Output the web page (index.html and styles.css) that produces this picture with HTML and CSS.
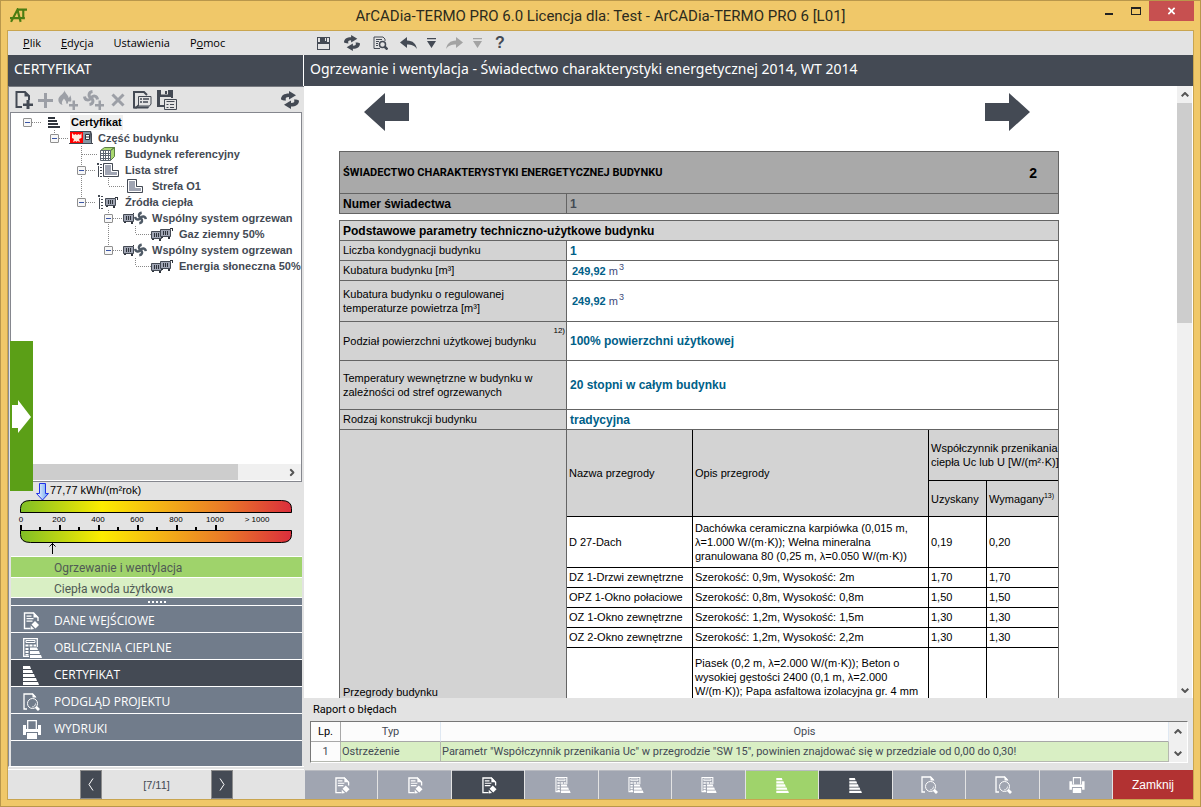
FILE: index.html
```
<!DOCTYPE html>
<html lang="pl">
<head>
    <meta charset="utf-8">
    <title>ArCADia-TERMO PRO 6</title>
    <link rel="stylesheet" href="styles.css">
</head>
<body>

<!-- shared icons -->
<svg class="sprite" aria-hidden="true">
    <symbol id="i-floppy" viewBox="0 0 14 14">
        <path fill="currentColor" fill-rule="evenodd" d="M0 1h13v13H0zM1 8v5h11V8zM1 2v4h2V2zM10 2v4h2V2zM8 2v3h1V2z"/>
    </symbol>
    <symbol id="i-refresh" viewBox="0 0 18 18">
        <path fill="currentColor" d="M0 8.500C0 4.500 3 2.500 8 2.500V0l7 4.300-7 4.200V6C5 6 4 7 5 9.500 2 9.500 1 9 0 8.500zM18 9.500c0 4-3 6-8 6V18l-7-4.300 7-4.200V12c3 0 4-1 3-3.500 3 0 4 .5 5 1z"/>
    </symbol>
    <symbol id="i-preview" viewBox="0 0 15 14">
        <path fill="none" stroke="currentColor" d="M7 12.500H1V1h9l2 2v2M3 3.500h6M3 5.500h3M3 7.500h2M3 9.500h2"/>
        <circle cx="9.500" cy="8.500" r="3" fill="none" stroke="currentColor" stroke-width="1.500"/>
        <path stroke="currentColor" stroke-width="2.500" d="M11.500 10.500l3 3"/>
    </symbol>
    <symbol id="i-undo" viewBox="0 0 17 13">
        <path fill="currentColor" d="M0 5.500L7 0v3.500c6 0 9 3.500 10 8.500-2.500-3.500-5.500-4.500-10-4.500V11z"/>
    </symbol>
    <symbol id="i-drop" viewBox="0 0 9 10">
        <path fill="currentColor" d="M0 0h9v1.200H0zM0 3h9L4.500 10z"/>
    </symbol>
    <symbol id="i-newdoc" viewBox="0 0 18 18">
        <path fill="none" stroke="currentColor" stroke-width="2" d="M7 16H1.500V1H10l4 4v4"/>
        <path fill="currentColor" d="M9.500 0L15 5.500H9.500zM8 12.500h3.500V9h3v3.500H18v2.500h-3.500v3h-3v-3H8z"/>
    </symbol>
    <symbol id="i-plus" viewBox="0 0 15 15">
        <path fill="currentColor" d="M6 0h3v6h6v3H9v6H6V9H0V6h6z"/>
    </symbol>
    <symbol id="i-flame" viewBox="0 0 20 20">
        <path fill="currentColor" d="M7 0c-1 3 4 5 3.500 8C12 7 12 6 12 5c1.500 2.500 1.500 5 1 6.500h-3v2H8c1-2-1-3-2-5-1 2-3 3-1.500 6.500C1 14 0 11 .5 8.500 1.500 5.500 5.500 4 7 0zM11 14h3.500v-3.500H17V14h3v2.500h-3V20h-2.500v-3.500H11z"/>
    </symbol>
    <symbol id="i-fan" viewBox="0 0 16 16">
        <path fill="none" stroke="currentColor" stroke-width="3" d="M8 8C5 6 5.500 2 9.500 1.500M8 8c2-3 6-2.500 6.500 1.500M8 8c3 2 2.500 6-1.500 6.500M8 8c-2 3-6 2.500-6.500-1.500"/>
    </symbol>
    <symbol id="i-fanplus" viewBox="0 0 21 20">
        <use href="#i-fan" width="16" height="16"/>
        <path fill="currentColor" d="M12 14h3.500v-3.500H18V14h3v2.500h-3V20h-2.500v-3.500H12z"/>
    </symbol>
    <symbol id="i-cross" viewBox="0 0 14 14">
        <path stroke="currentColor" stroke-width="3" d="M1.500 1.500l11 11M12.500 1.500l-11 11"/>
    </symbol>
    <symbol id="i-report" viewBox="0 0 19 18">
        <path fill="none" stroke="currentColor" stroke-width="2" d="M4 16.500H1V1h10l3 3"/>
        <path fill="#e3e3e3" stroke="currentColor" d="M5.500 5.500h12.500v7.500l-1.500 2H5.500z"/>
        <path fill="currentColor" d="M1 17.500L5.500 13v2.500h11l1.500-2-3 4z"/>
        <path stroke="currentColor" stroke-width="1.300" d="M7 8h2M10 8h6M7 11h2M10 11h5"/>
    </symbol>
    <symbol id="i-savereport" viewBox="0 0 20 20">
        <path fill="currentColor" fill-rule="evenodd" d="M0 0h16v8h-2V7H3v8h4v2H0zM4 0v4.500h7V0z"/>
        <path fill="currentColor" d="M8 1h2v3H8z"/>
        <path fill="#e3e3e3" stroke="currentColor" d="M7.500 9.500h12v10h-12z"/>
        <path stroke="currentColor" d="M9.500 11.500h8M9.500 14.500h2M13 14.500h4M9.500 17.500h2M13 17.500h4"/>
    </symbol>
    <symbol id="i-stack" viewBox="0 0 17 19">
        <path fill="currentColor" d="M0 0h7l1 3H0zM0 4h9l1 3H0zM0 8h11l1 3H0zM0 12h13l1 3H0zM0 16h15l1 3H0z"/>
    </symbol>
    <symbol id="i-edit" viewBox="0 0 16 18">
        <path fill="none" stroke="currentColor" stroke-width="1.400" d="M7 16.500H1V1h9l4.500 4.500V9"/>
        <path fill="currentColor" d="M10 0l5 5.500h-5zM3 3.500h5v1.200H3zM3 6h7v1.200H3zM3 8.500h6v1.200H3zM11.500 9l4 4-3.500 3.500-4-4zM7.200 13.500l3.500 3.500-3.500.5z"/>
    </symbol>
    <symbol id="i-calc" viewBox="0 0 19 20">
        <path fill="none" stroke="currentColor" stroke-width="1.300" d="M6 18.300H.7V.7h13.600V9"/>
        <path fill="none" stroke="currentColor" d="M3 2.500h9v2H3z"/>
        <path fill="currentColor" d="M2.500 6.500h3v2h-3zM6.500 6.500h3v2h-3zM10.500 6.500h2.500v2h-2.500zM2.500 10h3v2h-3zM2.500 13h3v2h-3zM2.500 16h3v1.500h-3zM7 9.500h7l1 2.500H7zM7 13h9l1 3H7zM7 17h11l1 3H7z"/>
    </symbol>
    <symbol id="i-search" viewBox="0 0 17 18">
        <path fill="none" stroke="currentColor" stroke-width="1.300" d="M4 16H1V1h8.500l3 3"/>
        <path fill="currentColor" d="M9.500 0l4 4.500h-4zM12 15l2-2 3 3-2 2z"/>
        <circle cx="9.500" cy="10.500" r="5" fill="none" stroke="currentColor"/>
        <path fill="none" stroke="currentColor" stroke-width=".8" d="M9 14c2 0 3.500-1.500 3.500-3.500"/>
    </symbol>
    <symbol id="i-print" viewBox="0 0 18 19">
        <path fill="currentColor" d="M0 5h3v4h12V5h3v10h-3v-3H3v3H0zM4 13h10v6H4z"/>
        <path fill="none" stroke="currentColor" stroke-width="1.300" d="M4.700 9V.7h8.600V9"/>
    </symbol>
    <symbol id="i-list" viewBox="0 0 6 14">
        <path fill="#444a54" d="M0 0h2v2H0zM1 3h1v11H1zM3 1h2v1H3zM3 4h2v1H3zM3 7h2v1H3zM3 10h2v1H3zM3 13h2v1H3z"/>
    </symbol>
    <symbol id="i-zone" viewBox="0 0 16 14">
        <path fill="#a0a5b3" stroke="#444a54" d="M.5.500h9v7h6v6H.5z"/>
        <path fill="none" stroke="#fff" d="M1.500 1.500h7v7h6v4h-13z"/>
    </symbol>
    <symbol id="i-heater" viewBox="0 0 13 12">
        <path fill="#a0a5b3" stroke="#444a54" d="M.5 2.500h10v7H.5z"/>
        <path fill="#2f343c" d="M3 4h1v4H3zM5 4h1v4H5zM7 4h1v4H7zM10 1h3v3h-1V2h-2zM1 10h2v1H1zM8 10h2v2H8z"/>
    </symbol>
    <symbol id="i-chevron" viewBox="0 0 8 5">
        <path fill="none" stroke="currentColor" stroke-width="2" d="M.7 4.300L4 1l3.300 3.300"/>
    </symbol>
    <symbol id="i-bigarrow" viewBox="0 0 45 38">
        <path fill="currentColor" d="M0 19L21 0v10h24v18H21v10z"/>
    </symbol>
</svg>

<header class="titlebar">
    <svg class="logo" viewBox="0 0 16 14" role="img" aria-label="AT">
        <path fill="none" stroke="#4b7d12" stroke-width="2" d="M1 13L7 1.500l3 11.500M7 1.500h9M12.500 1v9M0 9.500h14"/>
    </svg>
    <h1 class="window-title">ArCADia-TERMO PRO 6.0 Licencja dla: Test - ArCADia-TERMO PRO 6 [L01]</h1>
    <div class="window-buttons">
        <button type="button" class="win-btn" aria-label="Minimalizuj"><span class="min-mark"></span></button>
        <button type="button" class="win-btn" aria-label="Maksymalizuj"><span class="max-mark"></span></button>
        <button type="button" class="win-btn win-close" aria-label="Zamknij okno"><svg width="9" height="8" viewBox="0 0 14 14"><use href="#i-cross"/></svg></button>
    </div>
</header>

<div class="client">

    <div class="menubar">
        <nav class="menu">
            <a href="#"><u>P</u>lik</a>
            <a href="#"><u>E</u>dycja</a>
            <a href="#">Ustawienia</a>
            <a href="#">P<u>o</u>moc</a>
        </nav>
        <div class="quick">
            <button type="button" aria-label="Zapisz"><svg width="14" height="14"><use href="#i-floppy"/></svg></button>
            <button type="button" aria-label="Przelicz"><svg width="16" height="16"><use href="#i-refresh"/></svg></button>
            <button type="button" aria-label="Podgląd"><svg width="15" height="14"><use href="#i-preview"/></svg></button>
            <button type="button" aria-label="Cofnij"><svg width="17" height="13"><use href="#i-undo"/></svg></button>
            <button type="button" class="narrow" aria-label="Lista cofnięć"><svg width="9" height="10"><use href="#i-drop"/></svg></button>
            <button type="button" class="off" aria-label="Ponów"><svg class="flip" width="17" height="13"><use href="#i-undo"/></svg></button>
            <button type="button" class="narrow off" aria-label="Lista ponowień"><svg width="9" height="10"><use href="#i-drop"/></svg></button>
            <button type="button" class="help">?</button>
        </div>
    </div>

    <div class="headings">
        <h2>CERTYFIKAT</h2>
        <h2>Ogrzewanie i wentylacja - Świadectwo charakterystyki energetycznej 2014, WT 2014</h2>
    </div>

    <div class="main">

        <!-- left side: tree, gauge, stages -->
        <aside class="sidebar">
            <div class="tools">
                <button type="button" aria-label="Nowy"><svg width="18" height="18"><use href="#i-newdoc"/></svg></button>
                <button type="button" class="off" aria-label="Dodaj"><svg width="15" height="15"><use href="#i-plus"/></svg></button>
                <button type="button" class="off" aria-label="Dodaj ogrzewanie"><svg width="20" height="20"><use href="#i-flame"/></svg></button>
                <button type="button" class="off" aria-label="Dodaj wentylację"><svg width="21" height="20"><use href="#i-fanplus"/></svg></button>
                <button type="button" class="off" aria-label="Usuń"><svg width="14" height="14"><use href="#i-cross"/></svg></button>
                <button type="button" aria-label="Raport"><svg width="19" height="18"><use href="#i-report"/></svg></button>
                <button type="button" aria-label="Zapisz raport"><svg width="20" height="20"><use href="#i-savereport"/></svg></button>
                <button type="button" class="last" aria-label="Odśwież"><svg width="18" height="18"><use href="#i-refresh"/></svg></button>
            </div>

            <div class="tree-box">
                <ul class="tree">
                    <li>
                        <div class="node"><span class="toggle"></span><span class="pic"><svg class="dark" width="14" height="12" viewBox="0 0 14 12"><path fill="currentColor" d="M1 1h7v2H1zM1 4h9v2H1zM1 7h10v2H1zM1 10h12v2H1z"/></svg></span><b class="selected">Certyfikat</b></div>
                        <ul>
                            <li>
                                <div class="node"><span class="toggle"></span><span class="pic"><svg width="24" height="14" viewBox="0 0 24 14"><path fill="#444a54" d="M1 0h21l1 3v9h1v1H0v-1h1z"/><path fill="#f00" d="M1 1h13v11H1z"/><path fill="#ffe9dc" d="M3 2l2 2 1.500-1L8 4l1.500-1L11 4l1.500-2v5L10 8l1 3-2.500-1-1 1-1-1L4 11l1-3-2-1z"/><path fill="#8796a3" d="M14 1h7l1 11h-8z"/><path fill="#fff" stroke="#2f343c" d="M16.500 3.500h4v5h-4zM16.500 6h4"/></svg></span><b>Część budynku</b></div>
                                <ul>
                                    <li>
                                        <div class="node leaf"><span class="dash"></span><span class="pic"><svg width="16" height="14" viewBox="0 0 16 14"><path fill="#a9d86f" stroke="#5d7f45" d="M.5 3.500l4-3h10l-4 3zM10.500 3.500l4-3v9l-4 4z"/><path fill="#fff" stroke="#5b6570" d="M.5 3.500h10v10H.5zM3.500 4v9M5.500 4v9M8.500 4v9M.5 6.500h10M.5 8.500h10M.5 11.500h10"/></svg></span><b>Budynek referencyjny</b></div>
                                    </li>
                                    <li>
                                        <div class="node"><span class="toggle"></span><span class="pic"><svg width="6" height="14"><use href="#i-list"/></svg><svg width="16" height="14"><use href="#i-zone"/></svg></span><b>Lista stref</b></div>
                                        <ul>
                                            <li>
                                                <div class="node leaf"><span class="dash"></span><span class="pic"><svg width="16" height="14"><use href="#i-zone"/></svg></span><b>Strefa O1</b></div>
                                            </li>
                                        </ul>
                                    </li>
                                    <li>
                                        <div class="node"><span class="toggle"></span><span class="pic"><svg width="6" height="14"><use href="#i-list"/></svg><svg class="gap" width="13" height="12"><use href="#i-heater"/></svg></span><b>Źródła ciepła</b></div>
                                        <ul>
                                            <li>
                                                <div class="node"><span class="toggle"></span><span class="pic"><svg width="11" height="12" viewBox="0 0 11 12"><use href="#i-heater" width="13" height="12"/></svg><svg class="slate" width="13" height="14"><use href="#i-fan"/></svg></span><b>Wspólny system ogrzewan</b></div>
                                                <ul>
                                                    <li>
                                                        <div class="node leaf"><span class="dash"></span><span class="pic"><svg width="22" height="14" viewBox="0 0 22 14"><use href="#i-heater" y="2" width="13" height="12"/><use href="#i-heater" x="9" width="13" height="12"/></svg></span><b>Gaz ziemny 50%</b></div>
                                                    </li>
                                                </ul>
                                            </li>
                                            <li>
                                                <div class="node"><span class="toggle"></span><span class="pic"><svg width="11" height="12" viewBox="0 0 11 12"><use href="#i-heater" width="13" height="12"/></svg><svg class="slate" width="13" height="14"><use href="#i-fan"/></svg></span><b>Wspólny system ogrzewan</b></div>
                                                <ul>
                                                    <li>
                                                        <div class="node leaf"><span class="dash"></span><span class="pic"><svg width="22" height="14" viewBox="0 0 22 14"><use href="#i-heater" y="2" width="13" height="12"/><use href="#i-heater" x="9" width="13" height="12"/></svg></span><b>Energia słoneczna 50%</b></div>
                                                    </li>
                                                </ul>
                                            </li>
                                        </ul>
                                    </li>
                                </ul>
                            </li>
                        </ul>
                    </li>
                </ul>
                <div class="hscroll"><span class="hthumb"></span><svg class="right" width="8" height="5"><use href="#i-chevron"/></svg></div>
                <!-- pull-out tab, lies over the tree -->
                <button type="button" class="pullout" aria-label="Rozwiń panel"><svg width="19" height="33" viewBox="0 0 19 33"><path fill="#fff" d="M0 5h6V0l13 17L6 33v-5H0z"/></svg></button>
            </div>

            <svg class="gauge" viewBox="0 0 291 74" role="img" aria-label="Wskaźnik EP">
                <defs>
                    <linearGradient id="scale">
                        <stop offset="0" stop-color="#7fbf26"/>
                        <stop offset=".3" stop-color="#fcec00"/>
                        <stop offset=".5" stop-color="#f5b815"/>
                        <stop offset=".75" stop-color="#e97a28"/>
                        <stop offset="1" stop-color="#db2e3c"/>
                    </linearGradient>
                    <linearGradient id="marker"><stop offset="0" stop-color="#fff"/><stop offset="1" stop-color="#5f9df0"/></linearGradient>
                </defs>
                <path fill="url(#marker)" stroke="#2030e8" d="M29.500 1.500h6v10h3L32.500 18l-6-6.500h3z"/>
                <text class="gauge-value" x="40" y="12">77,77 kWh/(m²rok)</text>
                <path fill="url(#scale)" stroke="#000" d="M10.500 30.500v-4q0-8 10-8h251q10 0 10 8v4z"/>
                <path fill="url(#scale)" stroke="#000" d="M10.500 48.500v4q0 8 10 8h251q10 0 10-8v-4z"/>
                <path stroke="#000" stroke-width="2" d="M11 43v5M50 43v5M89 43v5M128 43v5M167 43v5M206 43v5M30 45v3M69 45v3M108 45v3M147 45v3M186 45v3"/>
                <g class="gauge-num">
                    <text x="11" y="40">0</text><text x="49" y="40">200</text><text x="88" y="40">400</text><text x="127" y="40">600</text><text x="166" y="40">800</text><text x="205" y="40">1000</text><text x="247" y="40">&gt; 1000</text>
                </g>
                <path fill="none" stroke="#000" d="M42.500 61v11M39.500 64.500l3-3 3 3"/>
            </svg>

            <nav class="stages">
                <a href="#" class="sub on">Ogrzewanie i wentylacja</a>
                <a href="#" class="sub">Ciepła woda użytkowa</a>
                <div class="splitter"><i></i><i></i><i></i><i></i><i></i></div>
                <a href="#" class="stage"><svg width="17" height="18"><use href="#i-edit"/></svg>DANE WEJŚCIOWE</a>
                <a href="#" class="stage"><svg width="19" height="20"><use href="#i-calc"/></svg>OBLICZENIA CIEPLNE</a>
                <a href="#" class="stage on"><svg width="17" height="19"><use href="#i-stack"/></svg>CERTYFIKAT</a>
                <a href="#" class="stage"><svg width="17" height="18"><use href="#i-search"/></svg>PODGLĄD PROJEKTU</a>
                <a href="#" class="stage"><svg width="18" height="19"><use href="#i-print"/></svg>WYDRUKI</a>
                <div class="stage-rest"></div>
            </nav>
        </aside>

        <div class="content">
            <div class="doc-wrap">
                <div class="doc">
                    <div class="pages">
                        <button type="button" aria-label="Poprzednia strona"><svg width="45" height="38"><use href="#i-bigarrow"/></svg></button>
                        <button type="button" aria-label="Następna strona"><svg class="flip" width="45" height="38"><use href="#i-bigarrow"/></svg></button>
                    </div>

                    <table class="form form-head">
                        <colgroup><col class="c-label"><col></colgroup>
                        <tr class="h42"><th colspan="2"><div class="doc-title"><span>ŚWIADECTWO CHARAKTERYSTYKI ENERGETYCZNEJ BUDYNKU</span><span class="page-no">2</span></div></th></tr>
                        <tr class="h20"><th class="big">Numer świadectwa</th><td class="num">1</td></tr>
                    </table>

                    <table class="form">
                        <colgroup><col class="c-label"><col></colgroup>
                        <tr class="h20"><th colspan="2" class="big">Podstawowe parametry techniczno-użytkowe budynku</th></tr>
                        <tr class="h20"><th>Liczba kondygnacji budynku</th><td>1</td></tr>
                        <tr class="h20"><th>Kubatura budynku [m³]</th><td class="unit">249,92 <span>m<sup>3</sup></span></td></tr>
                        <tr class="h41"><th>Kubatura budynku o regulowanej<br>temperaturze powietrza [m³]</th><td class="unit">249,92 <span>m<sup>3</sup></span></td></tr>
                        <tr class="h39"><th class="noted"><div class="note-row"><span>Podział powierzchni użytkowej budynku</span><small>12)</small></div></th><td>100% powierzchni użytkowej</td></tr>
                        <tr class="h49"><th>Temperatury wewnętrzne w budynku w<br>zależności od stref ogrzewanych</th><td>20 stopni w całym budynku</td></tr>
                        <tr class="h20"><th>Rodzaj konstrukcji budynku</th><td>tradycyjna</td></tr>
                        <tr>
                            <th>Przegrody budynku</th>
                            <td class="nest">
                                <table class="walls">
                                    <colgroup><col class="w-name"><col><col class="w-got"><col class="w-req"></colgroup>
                                    <tr class="h50"><th rowspan="2">Nazwa przegrody</th><th rowspan="2">Opis przegrody</th><th colspan="2">Współczynnik przenikania<br>ciepła Uc lub U [W/(m²·K)]</th></tr>
                                    <tr class="h36"><th>Uzyskany</th><th>Wymagany<sup>13)</sup></th></tr>
                                    <tr class="h51"><td>D 27-Dach</td><td>Dachówka ceramiczna karpiówka (0,015 m,<br>λ=1.000 W/(m·K)); Wełna mineralna<br>granulowana 80 (0,25 m, λ=0.050 W/(m·K))</td><td>0,19</td><td>0,20</td></tr>
                                    <tr class="h20"><td>DZ 1-Drzwi zewnętrzne</td><td>Szerokość: 0,9m, Wysokość: 2m</td><td>1,70</td><td>1,70</td></tr>
                                    <tr class="h20"><td>OPZ 1-Okno połaciowe</td><td>Szerokość: 0,8m, Wysokość: 0,8m</td><td>1,50</td><td>1,50</td></tr>
                                    <tr class="h20"><td>OZ 1-Okno zewnętrzne</td><td>Szerokość: 1,2m, Wysokość: 1,5m</td><td>1,30</td><td>1,30</td></tr>
                                    <tr class="h20"><td>OZ 2-Okno zewnętrzne</td><td>Szerokość: 1,2m, Wysokość: 2,2m</td><td>1,30</td><td>1,30</td></tr>
                                    <tr class="long"><td></td><td>Piasek (0,2 m, λ=2.000 W/(m·K)); Beton o<br>wysokiej gęstości 2400 (0,1 m, λ=2.000<br>W/(m·K)); Papa asfaltowa izolacyjna gr. 4 mm</td><td></td><td></td></tr>
                                </table>
                            </td>
                        </tr>
                    </table>
                </div>
                <div class="vscroll"><svg width="8" height="5"><use href="#i-chevron"/></svg><span class="vthumb"></span><svg class="down" width="8" height="5"><use href="#i-chevron"/></svg></div>
            </div>

            <section class="report">
                <h3>Raport o błędach</h3>
                <div class="report-box">
                    <table class="errors">
                        <colgroup><col class="e-no"><col class="e-type"><col></colgroup>
                        <tr><th class="lp">Lp.</th><th>Typ</th><th>Opis</th></tr>
                        <tr><td class="no">1</td><td>Ostrzeżenie</td><td>Parametr "Współczynnik przenikania Uc" w przegrodzie "SW 15", powinien znajdować się w przedziale od 0,00 do 0,30!</td></tr>
                    </table>
                    <div class="rscroll"><svg width="8" height="5"><use href="#i-chevron"/></svg><svg class="down" width="8" height="5"><use href="#i-chevron"/></svg></div>
                </div>
            </section>
        </div>
    </div>

    <footer class="bottom">
        <div class="pager">
            <button type="button" aria-label="Wstecz"><svg width="6" height="13" viewBox="0 0 6 13"><path fill="none" stroke="#fff" d="M5 .5l-4 6 4 6"/></svg></button>
            <span>[7/11]</span>
            <button type="button" aria-label="Dalej"><svg width="6" height="13" viewBox="0 0 6 13"><path fill="none" stroke="#fff" d="M1 .5l4 6-4 6"/></svg></button>
        </div>
        <div class="tabs">
            <button type="button" aria-label="Dane 1"><svg width="15" height="17"><use href="#i-edit"/></svg></button>
            <button type="button" aria-label="Dane 2"><svg width="15" height="17"><use href="#i-edit"/></svg></button>
            <button type="button" class="dark-tab" aria-label="Dane 3"><svg width="15" height="17"><use href="#i-edit"/></svg></button>
            <button type="button" aria-label="Obliczenia 1"><svg width="16" height="16"><use href="#i-calc"/></svg></button>
            <button type="button" aria-label="Obliczenia 2"><svg width="16" height="16"><use href="#i-calc"/></svg></button>
            <button type="button" aria-label="Obliczenia 3"><svg width="16" height="16"><use href="#i-calc"/></svg></button>
            <button type="button" class="green-tab" aria-label="Certyfikat 1"><svg width="14" height="15"><use href="#i-stack"/></svg></button>
            <button type="button" class="dark-tab" aria-label="Certyfikat 2"><svg width="14" height="15"><use href="#i-stack"/></svg></button>
            <button type="button" aria-label="Podgląd 1"><svg width="17" height="18"><use href="#i-search"/></svg></button>
            <button type="button" aria-label="Podgląd 2"><svg width="17" height="18"><use href="#i-search"/></svg></button>
            <button type="button" aria-label="Wydruki"><svg width="16" height="16"><use href="#i-print"/></svg></button>
            <button type="button" class="close-tab">Zamknij</button>
        </div>
    </footer>
</div>

</body>
</html>
```
FILE: styles.css
```
* { box-sizing: border-box; }

body {
    margin: 0;
    height: 100vh;
    display: flex;
    flex-direction: column;
    padding: 0 6px 6px;
    border: 1px solid #b9974b;
    background: #f0c869;
    font-family: "Liberation Sans", Arial, sans-serif;
    font-size: 11px;
    color: #000;
    overflow: hidden;
}

h1, h2, h3, ul { margin: 0; padding: 0; font-weight: normal; }
ul { list-style: none; }
a { color: inherit; text-decoration: none; }
svg { display: block; flex: none; }
table { border-spacing: 0; table-layout: fixed; }

button {
    display: flex;
    align-items: center;
    justify-content: center;
    padding: 0;
    border: 0;
    background: none;
    color: #444a54;
    font: inherit;
}

.sprite { position: absolute; width: 0; height: 0; }
.off { color: #9c9fa6; }
.flip { transform: scaleX(-1); }
.down { transform: rotate(180deg); }
.right { transform: rotate(90deg); }
.dark { color: #2f343c; }
.slate { color: #4f5a66; }

/* title bar */
.titlebar {
    display: grid;
    grid-template-columns: 150px 1fr 150px;
    height: 29px;
    flex: none;
}
.logo { width: 17px; height: 15px; margin: 7px 0 0 3px; }
.window-title {
    font: 15px/30px Roboto, sans-serif;
    text-align: center;
    color: #2b2b1d;
    white-space: nowrap;
}
.window-buttons { display: flex; justify-content: flex-end; height: 20px; }
.win-btn { width: 27px; height: 20px; }
.win-close { width: 45px; background: #c75050; color: #fff; }
.min-mark { width: 8px; height: 2px; margin-top: 6px; background: #222; }
.max-mark { width: 10px; height: 8px; border: 1px solid #222; border-top-width: 2px; }

.client {
    flex: 1;
    min-height: 0;
    display: flex;
    flex-direction: column;
    border: 1px solid #c9a54f;
    background: #e3e3e3;
}

/* menu and quick buttons */
.menubar { display: flex; height: 24px; flex: none; }
.menu {
    display: flex;
    gap: 20px;
    width: 302px;
    padding-left: 15px;
    font: 11px/24px "Open Sans", sans-serif;
}
.quick { display: flex; }
.quick button { width: 28px; }
.quick .narrow { width: 18px; }
.quick .off { color: #a3a3a3; }
.quick .help { font-size: 16px; font-weight: bold; }

.headings {
    display: grid;
    grid-template-columns: 295px 1fr;
    gap: 1px;
    height: 31px;
    flex: none;
    background: #fff;
}
.headings h2 {
    padding-left: 6px;
    background: #444a54;
    color: #fff;
    font: 14px/28px "Noto Sans", sans-serif;
    white-space: nowrap;
    overflow: hidden;
}

.main {
    flex: 1;
    min-height: 0;
    display: grid;
    grid-template-columns: 296px 1fr;
    grid-template-rows: 100%;
}

/* left side */
.sidebar {
    display: flex;
    flex-direction: column;
    min-width: 0;
    margin-bottom: 2px;
    padding: 0 2px 0 1px;
    border-left: 1px solid #8b8d93;
    border-top: 1px solid #777a80;
    border-bottom: 1px solid #fff;
}
.tools {
    display: flex;
    align-items: center;
    gap: 5px;
    height: 25px;
    flex: none;
    padding: 1px 3px 0 5px;
}
.tools button:nth-child(5) { margin-left: 2px; }
.tools button:nth-child(6) { margin-left: 3px; }
.tools .last { margin-left: auto; }

.tree-box {
    position: relative;
    flex: 1;
    min-height: 0;
    display: flex;
    flex-direction: column;
    padding-bottom: 1px;
    border: 1px solid #85878e;
    background: #fff;
}
.tree {
    flex: 1;
    min-height: 0;
    overflow: hidden;
    padding: 1px 0 0 12px;
}
.tree ul { padding-left: 27px; }

/* dotted guide down to the last child */
.tree ul > li {
    background: repeating-linear-gradient(#888 0 1px, transparent 1px 2px) 4px 0 / 1px 100% no-repeat;
}
.tree ul > li:last-child { background-size: 1px 8px; }

.node {
    display: flex;
    align-items: center;
    height: 16px;
    white-space: nowrap;
    background: repeating-linear-gradient(90deg, #888 0 1px, transparent 1px 2px) 9px 8px / 10px 1px no-repeat;
}
.node.leaf { background-position: 5px 8px; background-size: 15px 1px; }
.node b { padding: 0 1px; color: #444a54; line-height: 15px; }
.node .selected { background: #efefef; color: #000; }
.dash { flex: none; width: 9px; }
.toggle {
    flex: none;
    width: 9px;
    height: 9px;
    border: 1px solid #8f8f8f;
    border-radius: 1px;
    background: linear-gradient(#3a55a5, #3a55a5) center / 5px 1px no-repeat #f7f7f7;
}
.pic {
    display: flex;
    flex: none;
    align-items: center;
    justify-content: center;
    width: 24px;
    margin: 0 4px 0 10px;
}
.pic .gap { margin-left: 1px; }

.hscroll {
    display: flex;
    align-items: center;
    justify-content: space-between;
    height: 16px;
    flex: none;
    padding-right: 5px;
    background: #f0f0f0;
    color: #555;
}
.hthumb { width: 227px; height: 16px; background: #cdcdcd; }

.pullout {
    position: absolute;
    left: -1px;
    bottom: -10px;
    width: 23px;
    height: 150px;
    background: #5b9f17;
}

.gauge { width: 291px; height: 74px; }
.gauge-value { font-size: 11px; }
.gauge-num { font-size: 8px; text-anchor: middle; }

.stages {
    flex: none;
    margin-left: 1px;
    color: #fff;
    font: 12px "Open Sans", sans-serif;
}
.sub {
    display: block;
    height: 20px;
    padding-left: 43px;
    border-top: 1px solid #fff;
    background: #d9efc4;
    color: #505a55;
    font-family: Roboto, sans-serif;
    line-height: 22px;
}
.sub.on { height: 21px; background: #9fd36b; }
.splitter {
    display: flex;
    justify-content: center;
    gap: 2px;
    height: 8px;
    padding-top: 3px;
    border-top: 1px solid #fff;
    background: #717c8b;
}
.splitter i { width: 2px; height: 2px; background: #fff; }
.stage {
    display: grid;
    grid-template-columns: 20px 1fr;
    gap: 11px;
    align-items: center;
    height: 27px;
    padding-left: 12px;
    border-top: 1px solid #fff;
    background: #717c8b;
    line-height: 30px;
}
.stage.on { background: #444a54; }
.stage-rest { height: 26px; border-top: 1px solid #fff; background: #717c8b; }

/* right side */
.content { display: flex; flex-direction: column; min-width: 0; }
.doc-wrap {
    flex: 1;
    min-height: 0;
    display: flex;
    background: #fff;
}
.doc { flex: 1; min-width: 0; overflow: hidden; padding: 7px 0 0 35px; }
.pages {
    display: flex;
    justify-content: space-between;
    width: 720px;
    padding: 0 29px 0 25px;
    margin-bottom: 20px;
}

.form { width: 720px; border: 1px solid #646464; border-width: 0 1px 1px 0; }
.form th, .form td {
    padding: 0 3px;
    border: 1px solid #646464;
    border-width: 1px 0 0 1px;
    text-align: left;
    line-height: 14px;
}
.form th { background: #d3d3d3; font-weight: normal; }
.form td { font-size: 12px; font-weight: bold; color: #006088; }
.form .big { font-size: 12px; font-weight: bold; }
.form-head { margin-bottom: 6px; }
.form-head th, .form-head .num { background: #a9a9a9; }
.form .num { color: #444a54; }
.form .unit { padding-left: 5px; font-size: 11px; }
.unit span { font-weight: normal; color: #404a7a; }
.unit sup { margin-left: 1px; font-size: 9px; line-height: 1px; }
.c-label { width: 227px; }
.doc-title {
    display: flex;
    align-items: center;
    justify-content: space-between;
    padding-right: 18px;
    font: bold 11px Roboto, sans-serif;
}
.page-no { font: bold 14px "Liberation Sans", sans-serif; }
.form .noted { padding-right: 1px; }
.note-row { display: flex; justify-content: space-between; line-height: 36px; }
.note-row small { font-size: 8px; line-height: 16px; }

.h20 { height: 20px; }
.h20 th:not(.big) { padding-bottom: 2px; }
.h36 { height: 36px; }
.h39 { height: 39px; }
.h41 { height: 41px; }
.h42 { height: 42px; }
.h49 { height: 49px; }
.h50 { height: 50px; }
.h51 { height: 51px; }

.form .nest { padding: 0; }
.walls { width: 100%; }
.walls th, .walls td {
    padding: 0 0 0 2px;
    border-color: #000;
    font-size: 11px;
    font-weight: normal;
    color: #000;
    white-space: nowrap;
}
.walls .h20 td { padding-bottom: 2px; }
.walls tr:first-child th { border-top: 0; }
.walls tr:not(.h36) > :first-child { border-left: 0; }
.walls sup { font-size: 7px; line-height: 1px; }
.walls .long { height: 307px; }
.walls .long td { padding-top: 8px; vertical-align: top; }
.w-name { width: 125px; }
.w-got { width: 58px; }
.w-req { width: 72px; }

.vscroll {
    display: flex;
    flex-direction: column;
    align-items: center;
    width: 15px;
    margin-right: 1px;
    padding: 6px 0 5px;
    background: #f0f0f0;
    color: #555;
}
.vthumb { width: 15px; height: 220px; margin: 6px 0 auto; background: #cdcdcd; }

/* error report */
.report { flex: none; height: 71px; padding: 4px 5px 0 6px; }
.report h3 { padding-left: 3px; font: 11px/15px Roboto, sans-serif; }
.report-box {
    display: flex;
    height: 42px;
    margin-top: 4px;
    border: 1px solid #777;
    border-color: #777 #fff #fff #777;
    background: #d9efc4;
}
.errors { flex: 1; font: 11px Roboto, sans-serif; color: #444a54; }
.errors tr { height: 19px; }
.errors th, .errors td {
    padding: 0 1px;
    border: 1px solid #b5b8b0;
    border-width: 0 1px 1px 0;
    font-weight: normal;
    white-space: nowrap;
}
.errors th { border-color: #a8a8a8; border-right-color: #dfe8f2; background: #fcfcfc; }
.errors .lp { color: #000; border-right-color: #a8a8a8; }
.errors .no { background: #fcfcfc; text-align: center; }
.e-no { width: 30px; }
.e-type { width: 100px; }
.rscroll {
    display: flex;
    flex-direction: column;
    align-items: center;
    justify-content: space-between;
    width: 18px;
    padding: 7px 0 6px;
    background: #f0f0f0;
    color: #555;
}

/* bottom bar */
.bottom {
    display: grid;
    grid-template-columns: 296px 1fr;
    height: 30px;
    flex: none;
}
.pager {
    display: flex;
    align-items: center;
    justify-content: space-between;
    padding: 0 71px 0 72px;
    border-top: 1px solid #fff;
    color: #444a54;
}
.pager button { width: 22px; height: 29px; border: 1px solid #8c8c8c; background: #444a54; }
.tabs {
    display: grid;
    grid-template-columns: repeat(11, 1fr) 80px;
    gap: 1px;
    padding: 1px 0 0 1px;
}
.tabs button { background: #a0a5b1; color: #fff; border-top: 1px solid #b9bbc1; padding-left: 2px; }
.tabs .dark-tab { background: #444a54; }
.tabs .green-tab { background: #9fd36b; }
.tabs .close-tab { background: #b23232; border-top: 0; padding: 0; font-size: 12px; }
```
